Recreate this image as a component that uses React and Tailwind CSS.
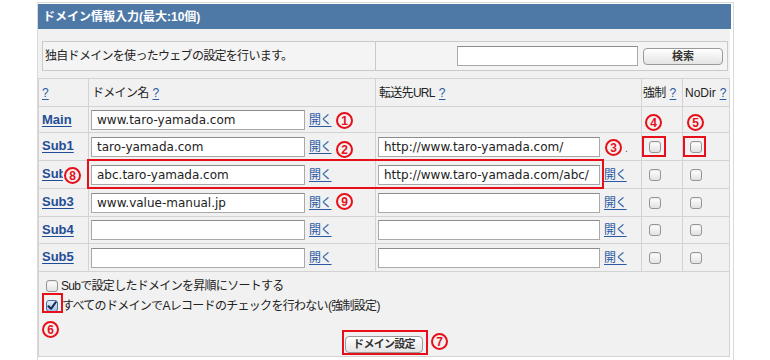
import React from 'react';

const rows = [
  { label: 'Main', domain: 'www.taro-yamada.com', url: null, h: 'h-[26px]' },
  { label: 'Sub1', domain: 'taro-yamada.com', url: 'http://www.taro-yamada.com/', h: 'h-[28px]' },
  { label: 'Sub2', domain: 'abc.taro-yamada.com', url: 'http://www.taro-yamada.com/abc/', h: 'h-[28px]' },
  { label: 'Sub3', domain: 'www.value-manual.jp', url: '', h: 'h-[28px]' },
  { label: 'Sub4', domain: '', url: '', h: 'h-[27px]' },
  { label: 'Sub5', domain: '', url: '', h: 'h-[28px]' },
];

const link = "text-[#2b5aa3] underline underline-offset-[2px]";
const jp = "tracking-[-0.7px]";
const line = "border-[#d3d3d3]";

function Q() {
  return <a className={`${link} ml-[4px]`}>?</a>;
}

function Box({ checked }) {
  if (checked) {
    return (
      <span className="inline-flex items-center justify-center w-[12px] h-[12px] rounded-[3px] border border-[#4a6ea8] bg-linear-to-b from-[#e2ecf9] to-[#a8c2e6] shrink-0">
        <svg width="10" height="10" viewBox="0 0 10 10">
          <path d="M1.5 5.2 L4 7.8 L8.8 1.2" fill="none" stroke="#1a2b50" strokeWidth="2" strokeLinecap="round" strokeLinejoin="round" />
        </svg>
      </span>
    );
  }
  return (
    <span className="inline-block w-[12px] h-[12px] rounded-[3px] border border-[#959595] bg-linear-to-b from-white to-[#e2e2e2] shadow-[inset_0_1px_1px_rgba(0,0,0,0.08)] shrink-0" />
  );
}

function Field({ value, w }) {
  return (
    <input
      readOnly
      value={value}
      className={`${w} h-[20px] bg-white border border-[#a9a9a9] border-t-[#8c8c8c] px-[5px] font-['DejaVu_Sans',sans-serif] text-[12px] text-[#222] outline-none`}
    />
  );
}

function Num({ n, pos }) {
  return (
    <span className={`absolute ${pos} w-[17px] h-[17px] rounded-full border-2 border-[#e60f1a] text-[#e60f1a] text-[12px] leading-none font-bold flex items-center justify-center`}>
      {n}
    </span>
  );
}

function Frame({ pos }) {
  return <div className={`absolute ${pos} border-2 border-[#e60f1a]`} />;
}

export default function App() {
  return (
    <div className="relative w-[770px] h-[360px] bg-white overflow-hidden font-['Liberation_Sans','Noto_Sans_CJK_JP',sans-serif] text-[12px] text-[#222]">
      <div className="ml-[37px] mt-[2px] w-[697px] h-[360px] border border-b-0 border-[#d9d9d9] pt-[1px]">
        <div className="w-[693px] h-[25px] bg-[#4e79a7] text-white font-bold text-[12px] pl-[5px] flex items-center">
          ドメイン情報入力(最大:10個)
        </div>

        <div className="w-[692px] bg-[#f1f1f1] pt-[12px]">
          {/* search row */}
          <div className="ml-[4px] w-[686px] h-[30px] border border-[#cacaca] bg-[#f4f4f4] flex">
            <div className={`w-[333px] border-r border-[#cacaca] flex items-center pl-[2px] ${jp}`}>
              独自ドメインを使ったウェブの設定を行います。
            </div>
            <div className="flex-1 flex items-center justify-end gap-[5px] pr-[4px]">
              <Field value="" w="w-[181px]" />
              <button className="w-[80px] h-[17px] rounded-[4px] border border-[#9a9a9a] bg-linear-to-b from-white to-[#e4e4e4] text-[11px] font-bold text-[#333] leading-none">
                検索
              </button>
            </div>
          </div>

          {/* domain table */}
          <div className={`mt-[7px] w-[692px] border-l border-t ${line}`}>
            <div className="flex h-[28px]">
              <div className={`w-[50px] border-r border-b ${line} flex items-center`}><span className="-ml-[1px]"><Q /></span></div>
              <div className={`w-[287px] border-r border-b ${line} flex items-center pl-[3px]`}><span className={jp}>ドメイン名</span><Q /></div>
              <div className={`w-[266px] border-r border-b ${line} flex items-center pl-[3px]`}><span className={jp}>転送先URL</span><Q /></div>
              <div className={`w-[41px] border-r border-b ${line} flex items-center pl-[1px]`}><span className={jp}>強制</span><Q /></div>
              <div className={`w-[47px] border-r border-b ${line} flex items-center pl-[2px]`}><span>NoDir</span><Q /></div>
            </div>

            {rows.map((r) => (
              <div key={r.label} className={`flex ${r.h}`}>
                <div className={`w-[50px] border-r border-b ${line} pl-[3px] pt-[3px]`}>
                  {r.label === 'Sub2' ? (
                    <span className="inline-block w-[21px] overflow-hidden whitespace-nowrap align-top">
                      <a className="font-bold text-[13px] text-[#1f4d96] underline underline-offset-[2px]">{r.label}</a>
                    </span>
                  ) : (
                    <a className="font-bold text-[13px] text-[#1f4d96] underline underline-offset-[2px]">{r.label}</a>
                  )}
                </div>
                <div className={`w-[287px] border-r border-b ${line} flex items-center pl-[2px]`}>
                  <Field value={r.domain} w="w-[214px]" />
                  <a className={`${link} ml-[4px] ${jp}`}>開く</a>
                </div>
                <div className={`w-[266px] border-r border-b ${line} flex items-center pl-[2px]`}>
                  {r.url !== null && (
                    <>
                      <Field value={r.url} w="w-[222px]" />
                      {r.label === 'Sub1' ? (
                        <span className="ml-[25px] text-[#2b5aa3] text-[10px] self-end mb-[4px]">.</span>
                      ) : (
                        <a className={`${link} ml-[4px] ${jp}`}>開く</a>
                      )}
                    </>
                  )}
                </div>
                <div className={`w-[41px] border-r border-b ${line} flex items-center pl-[7px]`}>
                  {r.url !== null && <Box />}
                </div>
                <div className={`w-[47px] border-r border-b ${line} flex items-center pl-[7px]`}>
                  {r.url !== null && <Box />}
                </div>
              </div>
            ))}

            {/* options + submit */}
            <div className={`h-[85px] border-r border-b ${line} pl-[7px] pt-[5px] flex flex-col`}>
              <label className={`h-[17px] flex items-center gap-[2px] ${jp}`}>
                <Box />
                <span className="ml-[1px]">Subで設定したドメインを昇順にソートする</span>
              </label>
              <label className={`mt-[3px] h-[17px] flex items-center gap-[4px] ${jp}`}>
                <Box checked />
                <span>すべてのドメインでAレコードのチェックを行わない(強制設定)</span>
              </label>
              <div className="mt-[22px] flex justify-center pr-[7px]">
                <button className={`w-[78px] h-[17px] rounded-[4px] border border-[#9a9a9a] bg-linear-to-b from-white to-[#e4e4e4] text-[11px] font-bold text-[#333] leading-none ${jp}`}>
                  ドメイン設定
                </button>
              </div>
            </div>
          </div>
        </div>
      </div>

      {/* annotations */}
      <Frame pos="left-[87px] top-[159px] w-[517px] h-[30px]" />
      <Frame pos="left-[642px] top-[136px] w-[24px] h-[21px]" />
      <Frame pos="left-[683px] top-[136px] w-[23px] h-[21px]" />
      <Frame pos="left-[42px] top-[293px] w-[21px] h-[20px]" />
      <Frame pos="left-[342px] top-[330px] w-[86px] h-[25px]" />

      <Num n="1" pos="left-[336px] top-[112px]" />
      <Num n="2" pos="left-[336px] top-[141px]" />
      <Num n="3" pos="left-[605px] top-[139px]" />
      <Num n="4" pos="left-[645px] top-[114px]" />
      <Num n="5" pos="left-[687px] top-[114px]" />
      <Num n="6" pos="left-[42px] top-[321px]" />
      <Num n="7" pos="left-[431px] top-[333px]" />
      <Num n="8" pos="left-[64px] top-[167px]" />
      <Num n="9" pos="left-[336px] top-[193px]" />
    </div>
  );
}
